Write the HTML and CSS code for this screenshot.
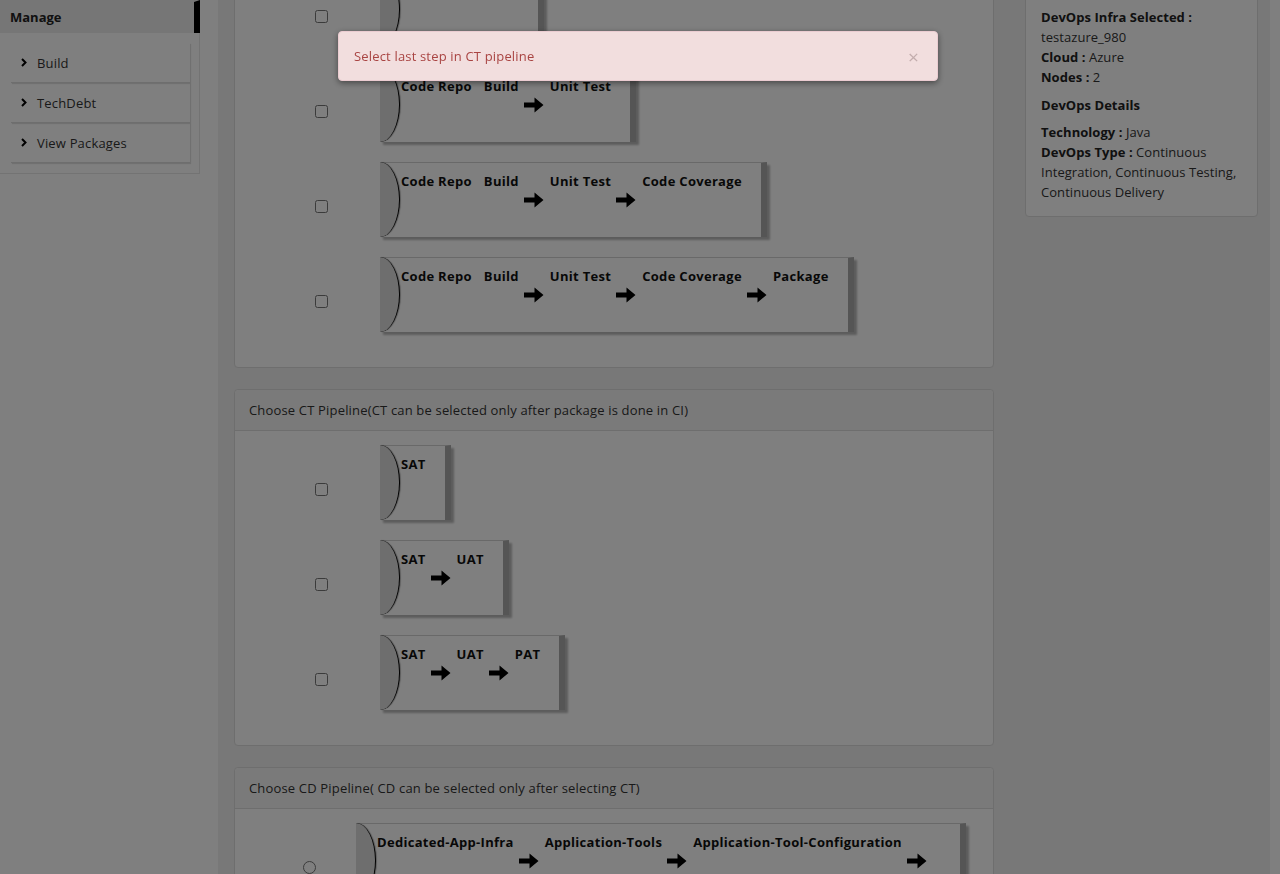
FILE: index.html
```html
<!DOCTYPE html>
<html lang="en">
<head>
<meta charset="utf-8">
<title>DevOps Pipeline</title>
<link rel="stylesheet" href="styles.css">
</head>
<body>
<div class="layout">
  <aside class="sidebar">
    <div class="side-head">Manage</div>
    <div class="side-box">
      <ul class="side-list">
        <li class="side-item"><svg class="chev" width="6" height="9" viewBox="0 0 6 9"><path d="M1 1l3.5 3.5L1 8" fill="none" stroke="#000" stroke-width="2"/></svg>Build</li>
        <li class="side-item"><svg class="chev" width="6" height="9" viewBox="0 0 6 9"><path d="M1 1l3.5 3.5L1 8" fill="none" stroke="#000" stroke-width="2"/></svg>TechDebt</li>
        <li class="side-item"><svg class="chev" width="6" height="9" viewBox="0 0 6 9"><path d="M1 1l3.5 3.5L1 8" fill="none" stroke="#000" stroke-width="2"/></svg>View Packages</li>
      </ul>
    </div>
  </aside>

  <div class="workspace">
    <main class="main">
      <section class="panel panel-ci">
        <div class="panel-head">Choose CI Pipeline</div>
        <div class="panel-body">
          <div class="row">
            <input type="checkbox" class="pick">
            <div class="pipe">
              <div class="cap"></div>
              <div class="steps">
                <span class="step step-first">Code Repo</span>
                <span class="step">Build</span>
              </div>
            </div>
          </div>
          <div class="row">
            <input type="checkbox" class="pick">
            <div class="pipe">
              <div class="cap"></div>
              <div class="steps">
                <span class="step step-first">Code Repo</span>
                <span class="step">Build</span>
                <svg class="arrow" width="20" height="16" viewBox="0 0 20 16"><path d="M0 5.5h10.5V0.5L19.5 8l-9 7.5v-5H0z" fill="#000"/></svg>
                <span class="step">Unit Test</span>
              </div>
            </div>
          </div>
          <div class="row">
            <input type="checkbox" class="pick">
            <div class="pipe">
              <div class="cap"></div>
              <div class="steps">
                <span class="step step-first">Code Repo</span>
                <span class="step">Build</span>
                <svg class="arrow" width="20" height="16" viewBox="0 0 20 16"><path d="M0 5.5h10.5V0.5L19.5 8l-9 7.5v-5H0z" fill="#000"/></svg>
                <span class="step">Unit Test</span>
                <svg class="arrow" width="20" height="16" viewBox="0 0 20 16"><path d="M0 5.5h10.5V0.5L19.5 8l-9 7.5v-5H0z" fill="#000"/></svg>
                <span class="step">Code Coverage</span>
              </div>
            </div>
          </div>
          <div class="row">
            <input type="checkbox" class="pick">
            <div class="pipe">
              <div class="cap"></div>
              <div class="steps">
                <span class="step step-first">Code Repo</span>
                <span class="step">Build</span>
                <svg class="arrow" width="20" height="16" viewBox="0 0 20 16"><path d="M0 5.5h10.5V0.5L19.5 8l-9 7.5v-5H0z" fill="#000"/></svg>
                <span class="step">Unit Test</span>
                <svg class="arrow" width="20" height="16" viewBox="0 0 20 16"><path d="M0 5.5h10.5V0.5L19.5 8l-9 7.5v-5H0z" fill="#000"/></svg>
                <span class="step">Code Coverage</span>
                <svg class="arrow" width="20" height="16" viewBox="0 0 20 16"><path d="M0 5.5h10.5V0.5L19.5 8l-9 7.5v-5H0z" fill="#000"/></svg>
                <span class="step">Package</span>
              </div>
            </div>
          </div>
        </div>
      </section>

      <section class="panel">
        <div class="panel-head">Choose CT Pipeline(CT can be selected only after package is done in CI)</div>
        <div class="panel-body">
          <div class="row">
            <input type="checkbox" class="pick">
            <div class="pipe">
              <div class="cap"></div>
              <div class="steps">
                <span class="step">SAT</span>
              </div>
            </div>
          </div>
          <div class="row">
            <input type="checkbox" class="pick">
            <div class="pipe">
              <div class="cap"></div>
              <div class="steps">
                <span class="step">SAT</span>
                <svg class="arrow" width="20" height="16" viewBox="0 0 20 16"><path d="M0 5.5h10.5V0.5L19.5 8l-9 7.5v-5H0z" fill="#000"/></svg>
                <span class="step">UAT</span>
              </div>
            </div>
          </div>
          <div class="row">
            <input type="checkbox" class="pick">
            <div class="pipe">
              <div class="cap"></div>
              <div class="steps">
                <span class="step">SAT</span>
                <svg class="arrow" width="20" height="16" viewBox="0 0 20 16"><path d="M0 5.5h10.5V0.5L19.5 8l-9 7.5v-5H0z" fill="#000"/></svg>
                <span class="step">UAT</span>
                <svg class="arrow" width="20" height="16" viewBox="0 0 20 16"><path d="M0 5.5h10.5V0.5L19.5 8l-9 7.5v-5H0z" fill="#000"/></svg>
                <span class="step">PAT</span>
              </div>
            </div>
          </div>
        </div>
      </section>

      <section class="panel">
        <div class="panel-head">Choose CD Pipeline( CD can be selected only after selecting CT)</div>
        <div class="panel-body">
          <div class="row row-cd">
            <input type="radio" class="pick-radio" name="cd">
            <div class="pipe pipe-cd">
              <div class="cap"></div>
              <div class="steps steps-cd">
                <span class="step">Dedicated-App-Infra</span>
                <svg class="arrow" width="20" height="16" viewBox="0 0 20 16"><path d="M0 5.5h10.5V0.5L19.5 8l-9 7.5v-5H0z" fill="#000"/></svg>
                <span class="step">Application-Tools</span>
                <svg class="arrow" width="20" height="16" viewBox="0 0 20 16"><path d="M0 5.5h10.5V0.5L19.5 8l-9 7.5v-5H0z" fill="#000"/></svg>
                <span class="step">Application-Tool-Configuration</span>
                <svg class="arrow" width="20" height="16" viewBox="0 0 20 16"><path d="M0 5.5h10.5V0.5L19.5 8l-9 7.5v-5H0z" fill="#000"/></svg>
              </div>
            </div>
          </div>
        </div>
      </section>
    </main>

    <aside class="info">
      <div class="info-line"><b>DevOps Infra Selected :</b></div>
      <div class="info-line">testazure_980</div>
      <div class="info-line"><b>Cloud :</b> Azure</div>
      <div class="info-line"><b>Nodes :</b> 2</div>
      <div class="info-title">DevOps Details</div>
      <div class="info-line"><b>Technology :</b> Java</div>
      <div class="info-line"><b>DevOps Type :</b> Continuous Integration, Continuous Testing, Continuous Delivery</div>
    </aside>
  </div>
</div>

<div class="backdrop"></div>
<div class="toast">
  <span class="toast-text">Select last step in CT pipeline</span>
  <span class="toast-close">×</span>
</div>
</body>
</html>
```

FILE: styles.css
```css
* { box-sizing: border-box; }

html, body {
  margin: 0;
  padding: 0;
  height: 100%;
  overflow: hidden;
  background: #fff;
  font-family: "Open Sans", "Noto Sans", sans-serif;
  font-size: 13px;
  letter-spacing: 0.17px;
  color: #333;
}

.layout {
  display: flex;
  align-items: flex-start;
  min-height: 100%;
}

/* sidebar */
.sidebar {
  width: 200px;
  flex: 0 0 200px;
}

.side-head {
  height: 33px;
  padding: 0 10px;
  font-weight: 700;
  letter-spacing: 0;
  color: #222;
  background: #ececec;
  border-right: 6px solid #000;
  border-top: 2px solid #ececec;
  line-height: 31px;
}

.side-box {
  padding: 10px 10px 10px 11px;
  border-right: 1px solid #e6e6e6;
  border-bottom: 1px solid #e6e6e6;
}

.side-list {
  list-style: none;
  margin: 0;
  padding: 0;
}

.side-item {
  display: flex;
  align-items: center;
  height: 40px;
  width: 179px;
  padding-left: 10px;
  color: #333;
  border-bottom: 1px solid #dcdcdc;
  box-shadow: 1px 1px 1px #e0e0e0;
}

.chev {
  margin-right: 10px;
}

/* workspace column */
.workspace {
  display: flex;
  align-items: flex-start;
  gap: 31px;
  margin-left: 18px;
  padding: 0 12px 0 16px;
  background: #f0f0f0;
  min-height: 874px;
}

.main {
  width: 760px;
  margin-top: -84px;
}

.panel {
  background: #fff;
  border: 1px solid #dcdcdc;
  border-radius: 4px;
  margin-bottom: 21px;
}

.panel-head {
  padding: 10px 14px;
  line-height: 20px;
  color: #333;
  background: #f5f5f5;
  border-bottom: 1px solid #dcdcdc;
  border-radius: 4px 4px 0 0;
}

.panel-body {
  padding: 14px 0 15px;
}

.row {
  display: flex;
  align-items: flex-start;
  margin-bottom: 20px;
}

.pick {
  width: 13px;
  height: 13px;
  margin: 38px 52px 0 80px;
}

.pick-radio {
  width: 13px;
  height: 13px;
  margin: 38px 40px 0 68px;
}

.pipe {
  display: flex;
  height: 75px;
  background: #fff;
  border-top: 1px solid #d2d2d2;
  border-right: 6px solid #ababab;
  box-shadow: 3px 3px 2px rgba(0, 0, 0, 0.28);
}

.pipe-cd {
  width: 610px;
}

.cap {
  width: 20px;
  flex: 0 0 20px;
  margin-top: -1px;
  background: #dcdcdc;
  border-right: 1.5px solid #000;
  border-radius: 0 100% 100% 0 / 0 50% 50% 0;
  box-shadow: 1px 0 1px rgba(0, 0, 0, 0.3);
}

.steps {
  display: flex;
  align-items: flex-start;
  padding: 9px 19px 0 1px;
}

.step {
  font-weight: 700;
  color: #111;
  line-height: 18px;
  letter-spacing: 0.3px;
  white-space: nowrap;
}

.step-first {
  margin-right: 12px;
}

.arrow {
  margin: 20px 6px 0 5px;
  flex: 0 0 20px;
}

/* info panel */
.info {
  width: 233px;
  margin-top: -10px;
  padding: 16px 15px 14px;
  background: #fff;
  border: 1px solid #dcdcdc;
  border-radius: 4px;
  line-height: 20px;
  color: #333;
  letter-spacing: 0.05px;
}

.info b {
  color: #222;
}

.info-title {
  margin: 8px 0 7px;
  font-weight: 700;
  color: #222;
}

/* modal backdrop + alert */
.backdrop {
  position: fixed;
  inset: 0;
  background: rgba(0, 0, 0, 0.5);
}

.toast {
  position: fixed;
  top: 31px;
  left: 338px;
  width: 600px;
  height: 50px;
  display: flex;
  align-items: center;
  justify-content: space-between;
  padding: 0 18px 0 15px;
  background: #f2dede;
  border: 1px solid #ebccd1;
  border-radius: 4px;
  box-shadow: 0 2px 6px rgba(0, 0, 0, 0.45);
  color: #a94442;
}

.toast-text {
  margin-top: 0;
}

.toast-close {
  font-size: 19px;
  color: #c3adad;
  line-height: 1;
  margin-top: 3px;
}
```
